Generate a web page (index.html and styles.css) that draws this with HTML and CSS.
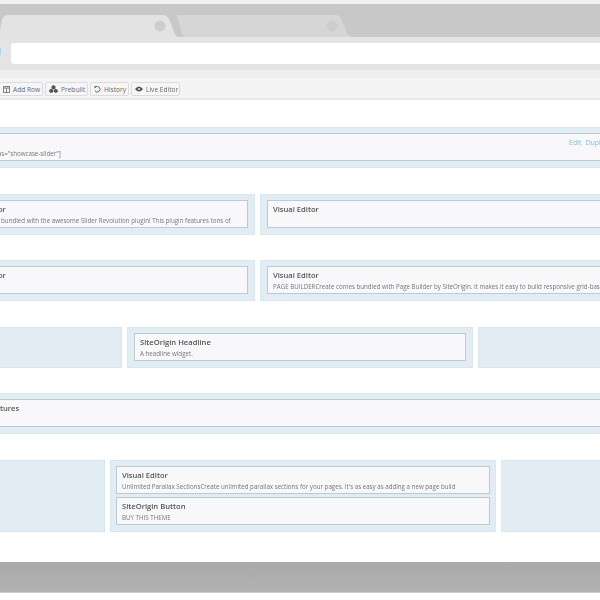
FILE: index.html
```html
<!DOCTYPE html>
<html lang="en">
<head>
    <meta charset="UTF-8">
    <meta name="viewport" content="width=device-width, initial-scale=1.0">
    <title>Page Builder</title>
    <link rel="stylesheet" href="styles.css">
</head>
<body>
    <div class="screen">
        <div class="browser">
            <div class="tab-strip">
                <svg class="tabs" width="360" height="22" viewBox="0 0 360 22">
                    <path class="tab-back" d="M187 22 Q183 22 181 16 L177 0 H336 Q340 0 342 5 L347 18 Q349 22 353 22 Z"/>
                    <path class="tab-front" d="M-6 22 Q-1 22 0 16 L2 5 Q3 0 8 0 H163 Q167 0 169 4 L174 17 Q176 22 179 22 Z"/>
                    <circle class="tab-dot" cx="160" cy="11" r="5.5"/>
                    <circle class="tab-dot" cx="332" cy="11" r="5.5"/>
                </svg>
            </div>
            <div class="address-row">
                <span class="reader-mark">d</span>
                <div class="address-bar"></div>
            </div>
            <div class="browser-edge"></div>
        </div>

        <div class="toolbar">
            <button class="tool-btn add-row">
                <svg width="7" height="7" viewBox="0 0 7 7"><path d="M.5.5h6v6h-6zM.5 2h6M3.500 2v4.500" fill="none" stroke="#666" stroke-width=".8"/></svg>
                Add Row
            </button>
            <button class="tool-btn prebuilt">
                <svg width="9" height="8" viewBox="0 0 9 8"><path d="M4.500 0 6.500 1.200V3.400L4.500 4.500 2.500 3.400V1.200ZM2.200 3.800 4.200 5V7L2.200 8 .2 7V5ZM6.800 3.800 8.800 5V7L6.800 8 4.800 7V5Z" fill="#555"/></svg>
                Prebuilt
            </button>
            <button class="tool-btn history">
                <svg width="7" height="7" viewBox="0 0 7 7"><path d="M1.200 1.200A2.800 2.800 0 1 1 .8 4.500" fill="none" stroke="#555" stroke-width=".9"/><path d="M.3.3 2.600.6.7 2.600Z" fill="#555"/></svg>
                History
            </button>
            <button class="tool-btn live">
                <svg width="8" height="6" viewBox="0 0 8 6"><path d="M0 3Q4-2 8 3 4 8 0 3Z" fill="#555"/><circle cx="4" cy="3" r="1" fill="#eee"/></svg>
                Live Editor
            </button>
        </div>

        <div class="builder">
            <div class="row row-one">
                <div class="cell">
                    <div class="widget widget-links">
                        <div>
                            <h3>Slider</h3>
                            <p>[rev_slider alias="showcase-slider"]</p>
                        </div>
                        <div class="actions"><a>Edit</a><a>Duplicate</a></div>
                    </div>
                </div>
            </div>

            <div class="row row-halves">
                <div class="cell">
                    <div class="widget">
                        <h3>Visual Editor</h3>
                        <p>Create comes bundled with the awesome Slider Revolution plugin! This plugin features tons of</p>
                    </div>
                </div>
                <div class="cell">
                    <div class="widget">
                        <h3>Visual Editor</h3>
                    </div>
                </div>
            </div>

            <div class="row row-halves">
                <div class="cell">
                    <div class="widget">
                        <h3>Visual Editor</h3>
                    </div>
                </div>
                <div class="cell">
                    <div class="widget">
                        <h3>Visual Editor</h3>
                        <p>PAGE BUILDERCreate comes bundled with Page Builder by SiteOrigin. It makes it easy to build responsive grid-based pages</p>
                    </div>
                </div>
            </div>

            <div class="row row-thirds">
                <div class="cell cell-empty"></div>
                <div class="cell">
                    <div class="widget">
                        <h3>SiteOrigin Headline</h3>
                        <p>A headline widget.</p>
                    </div>
                </div>
                <div class="cell cell-empty"></div>
            </div>

            <div class="row row-one">
                <div class="cell">
                    <div class="widget">
                        <h3>Theme Features</h3>
                    </div>
                </div>
            </div>

            <div class="row row-wide">
                <div class="cell cell-empty"></div>
                <div class="cell cell-stack">
                    <div class="widget">
                        <h3>Visual Editor</h3>
                        <p>Unlimited Parallax SectionsCreate unlimited parallax sections for your pages. It's as easy as adding a new page build</p>
                    </div>
                    <div class="widget">
                        <h3>SiteOrigin Button</h3>
                        <p>BUY THIS THEME</p>
                    </div>
                </div>
                <div class="cell cell-empty"></div>
            </div>
        </div>

        <div class="bottom-bar"></div>
    </div>
</body>
</html>
```

FILE: styles.css
```css
* {
    margin: 0;
    padding: 0;
    box-sizing: border-box;
    font-family: 'Open Sans', 'Noto Sans', sans-serif;
}

html, body {
    background: #fff;
    overflow: hidden;
}

.screen {
    width: 600px;
    height: 600px;
    overflow: hidden;
    display: flex;
    flex-direction: column;
    filter: blur(0.45px);
}

/* browser frame */
.browser {
    padding-top: 4px;
    flex: none;
    background: #f1f1f1;
}

.tab-strip {
    height: 33px;
    padding-top: 11px;
    background: #c8c8c8;
}

.tabs {
    display: block;
}

.tab-front {
    fill: #e3e3e3;
}

.tab-back {
    fill: #d6d6d6;
}

.tab-dot {
    fill: #cdcdcd;
}

.address-row {
    height: 33px;
    background: #e4e4e4;
    padding: 6px 0;
    display: flex;
    overflow: hidden;
}

.reader-mark {
    width: 16px;
    margin-left: -5px;
    font-size: 9px;
    font-weight: 700;
    line-height: 17px;
    color: #555;
    flex: none;
}

.address-bar {
    flex: 1;
    background: #fff;
    border-radius: 3px 0 0 3px;
}

.browser-edge {
    height: 8px;
    background: #eeeeee;
}

/* page builder buttons */
.toolbar {
    height: 22px;
    flex: none;
    background: #f4f4f4;
    border-bottom: 2px solid #e9e9e9;
    display: flex;
    align-items: flex-start;
    gap: 2px;
    padding-top: 4px;
    margin-left: -1px;
}

.tool-btn {
    height: 14px;
    display: flex;
    align-items: center;
    gap: 3px;
    padding: 0 3px;
    background: #f6f6f6;
    border: 1px solid #dcdcdc;
    border-radius: 2px;
    font-size: 6.6px;
    color: #6a6a6a;
    white-space: nowrap;
}

.tool-btn svg {
    flex: none;
}

.add-row {
    width: 44px;
    padding-left: 3px;
}

.prebuilt {
    width: 43px;
}

.history {
    width: 39px;
}

.live {
    width: 49px;
}

/* rows */
.builder {
    flex: none;
    height: 462px;
    padding-top: 27px;
    display: flex;
    flex-direction: column;
    gap: 25.5px;
}

.row {
    display: grid;
    gap: 5px;
    margin-left: -53px;
    width: 730px;
}

.row-one {
    grid-template-columns: 1fr;
}

.row-halves {
    grid-template-columns: 308px 1fr;
}

.row-thirds {
    margin-left: -120px;
    grid-template-columns: 242px 346px 1fr;
}

.row-wide {
    margin-left: -119px;
    grid-template-columns: 224px 386px 1fr;
}

.cell {
    background: #e1ecf3;
    border: 1px solid #dbe7ee;
    padding: 5px 6px 6px;
    min-height: 41px;
    overflow: hidden;
}

.cell-stack {
    display: flex;
    flex-direction: column;
    gap: 3px;
    padding: 5px 5px 6px;
}

.widget {
    height: 28px;
    flex: none;
    background: #f8f8fa;
    border: 1px solid #bccbd3;
    padding: 3px 5px;
    overflow: hidden;
}

.widget-links {
    display: flex;
    justify-content: space-between;
}

h3 {
    font-size: 7.6px;
    font-weight: 600;
    line-height: 11px;
    color: #555;
    white-space: nowrap;
}

.widget p {
    font-size: 6.2px;
    line-height: 9px;
    margin-top: 1px;
    color: #777;
    white-space: nowrap;
}

.actions {
    flex: none;
    width: 95px;
    display: flex;
    gap: 4px;
    padding-top: 1px;
}

.actions a {
    font-size: 7px;
    color: #84bde0;
}

.bottom-bar {
    flex: none;
    height: 31px;
    background: linear-gradient(#a9a9a9, #b3b3b3);
    border-bottom: 1px solid #ccc;
}
```
